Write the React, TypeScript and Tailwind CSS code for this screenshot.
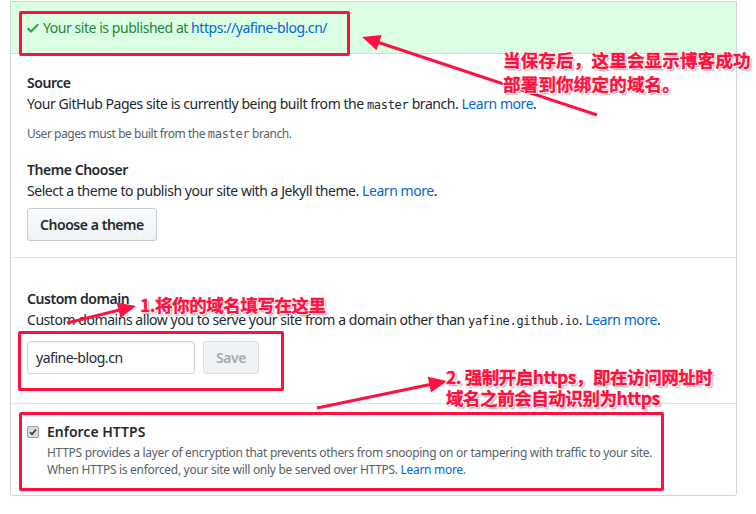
import React from "react";

const RED = "#ff1040";

function Arrow({ x1, y1, x2, y2 }: { x1: number; y1: number; x2: number; y2: number }) {
  const dx = x2 - x1;
  const dy = y2 - y1;
  const len = Math.hypot(dx, dy);
  const ux = dx / len;
  const uy = dy / len;
  const headLen = 18;
  const headW = 8;
  const bx = x2 - ux * headLen;
  const by = y2 - uy * headLen;
  const pts = `${x2},${y2} ${bx - uy * headW},${by + ux * headW} ${bx + uy * headW},${by - ux * headW}`;
  return (
    <g>
      <line x1={x1} y1={y1} x2={bx + ux * 2} y2={by + uy * 2} stroke={RED} strokeWidth={3} />
      <polygon points={pts} fill={RED} />
    </g>
  );
}

function Note({ children, className }: { children: React.ReactNode; className: string }) {
  return (
    <div
      className={`absolute font-bold text-[#ff1040] ${className}`}
      style={{
        fontFamily: '"Noto Sans CJK SC", "Noto Sans", sans-serif',
        WebkitTextStroke: "0.4px #ff1040",
        textShadow: "1px 1px 0 #fff, -1px -1px 0 #fff, 1px -1px 0 #fff, -1px 1px 0 #fff, 2px 2px 2px rgba(0,0,0,.35)",
      }}
    >
      {children}
    </div>
  );
}

export default function App() {
  const mono = { fontFamily: '"DejaVu Sans Mono", monospace', letterSpacing: "-0.3px" };
  return (
    <div
      className="relative w-[756px] h-[514px] bg-white overflow-hidden text-[14px] tracking-[-0.45px] text-[#24292e]"
      style={{ fontFamily: '"Noto Sans", sans-serif' }}
    >
      <div className="ml-[10px] w-[727px] mt-[1px] border border-[#d1d5da] rounded-b-[3px]">
        {/* Published banner */}
        <div className="h-[52px] bg-[#dcffe4] border-b border-[#c3e6cb] flex items-center px-4 text-[#22863a]">
          <svg width="12" height="16" viewBox="0 0 12 16" className="mr-[4px] fill-[#28a745]">
            <path d="M12 5l-8 8-4-4 1.5-1.5L4 10l6.5-6.5L12 5z" />
          </svg>
          <span>
            Your site is published at <span className="text-[#0366d6]">https://yafine-blog.cn/</span>
          </span>
        </div>

        {/* Source + theme */}
        <div className="px-4 pt-[18px] pb-[16px] border-b border-[#e1e4e8]">
          <div className="font-semibold leading-[21px]">Source</div>
          <div className="leading-[21px]">
            Your GitHub Pages site is currently being built from the{" "}
            <span className="text-[12px]" style={mono}>master</span> branch.{" "}
            <span className="text-[#0366d6]">Learn more</span>.
          </div>
          <div className="mt-[9px] text-[12px] leading-[18px] text-[#586069]">
            User pages must be built from the <span style={mono}>master</span> branch.
          </div>

          <div className="mt-[16px] font-semibold leading-[21px]">Theme Chooser</div>
          <div className="leading-[21px]">
            Select a theme to publish your site with a Jekyll theme.{" "}
            <span className="text-[#0366d6]">Learn more</span>.
          </div>
          <button className="mt-[7px] h-[33px] px-3 rounded-[3px] border border-[#c6cbd1] bg-gradient-to-b from-[#fafbfc] to-[#eff3f6] font-semibold">
            Choose a theme
          </button>
        </div>

        {/* Custom domain */}
        <div className="px-4 pt-[30px] pb-[29px] border-b border-[#e1e4e8]">
          <div className="font-semibold leading-[21px]">Custom domain</div>
          <div className="leading-[21px]">
            Custom domains allow you to serve your site from a domain other than{" "}
            <span className="text-[12px]" style={mono}>yafine.github.io</span>.{" "}
            <span className="text-[#0366d6]">Learn more</span>.
          </div>
          <div className="mt-[9px] flex gap-2">
            <div className="w-[168px] h-[33px] rounded-[3px] border border-[#d1d5da] shadow-[inset_0_1px_2px_rgba(27,31,35,0.075)] flex items-center px-2">
              yafine-blog.cn
            </div>
            <button className="w-[56px] h-[33px] rounded-[3px] border border-[#dbdfe3] bg-[#eff3f6] text-[#a3aab1] font-semibold">
              Save
            </button>
          </div>
        </div>

        {/* Enforce HTTPS */}
        <div className="px-4 pt-[17px] pb-[17px]">
          <div className="flex items-center gap-[8px]">
            <span className="w-[12px] h-[12px] rounded-[2px] border border-[#9a9a9a] bg-[#dcdcdc] flex items-center justify-center">
              <svg width="8" height="8" viewBox="0 0 8 8">
                <path d="M1 4.2l2 2L7 1.5" stroke="#333" strokeWidth="1.6" fill="none" />
              </svg>
            </span>
            <span className="font-semibold leading-[21px] tracking-normal">Enforce HTTPS</span>
          </div>
          <div className="mt-[2px] pl-[20px] text-[12px] leading-[17px] tracking-[-0.3px] text-[#586069]">
            <div>HTTPS provides a layer of encryption that prevents others from snooping on or tampering with traffic to your site.</div>
            <div>
              When HTTPS is enforced, your site will only be served over HTTPS.{" "}
              <span className="text-[#0366d6]">Learn more</span>.
            </div>
          </div>
        </div>
      </div>

      {/* Annotation boxes */}
      <div className="absolute left-[19px] top-[11px] w-[331px] h-[45px] border-[3px] border-[#ff1040] rounded-[2px]" />
      <div className="absolute left-[18px] top-[331px] w-[266px] h-[60px] border-[3px] border-[#ff1040] rounded-[2px]" />
      <div className="absolute left-[19px] top-[412px] w-[645px] h-[79px] border-[3px] border-[#ff1040] rounded-[2px]" />

      {/* Arrows */}
      <svg className="absolute inset-0 pointer-events-none" width="756" height="514">
        <Arrow x1={597} y1={115} x2={362} y2={37} />
        <Arrow x1={67} y1={323} x2={136} y2={306} />
        <Arrow x1={317} y1={408} x2={447} y2={381} />
      </svg>

      {/* Annotation text */}
      <Note className="left-[503px] top-[48px] text-[17.5px] leading-[24px] tracking-[0.2px]">
        <div>当保存后，这里会显示博客成功</div>
        <div>部署到你绑定的域名。</div>
      </Note>
      <Note className="left-[140px] top-[293px] text-[17.5px] leading-[24px]">1.将你的域名填写在这里</Note>
      <Note className="left-[446px] top-[366px] text-[17.5px] leading-[21px]">
        <div>2. 强制开启https，即在访问网址时</div>
        <div>域名之前会自动识别为https</div>
      </Note>
    </div>
  );
}
